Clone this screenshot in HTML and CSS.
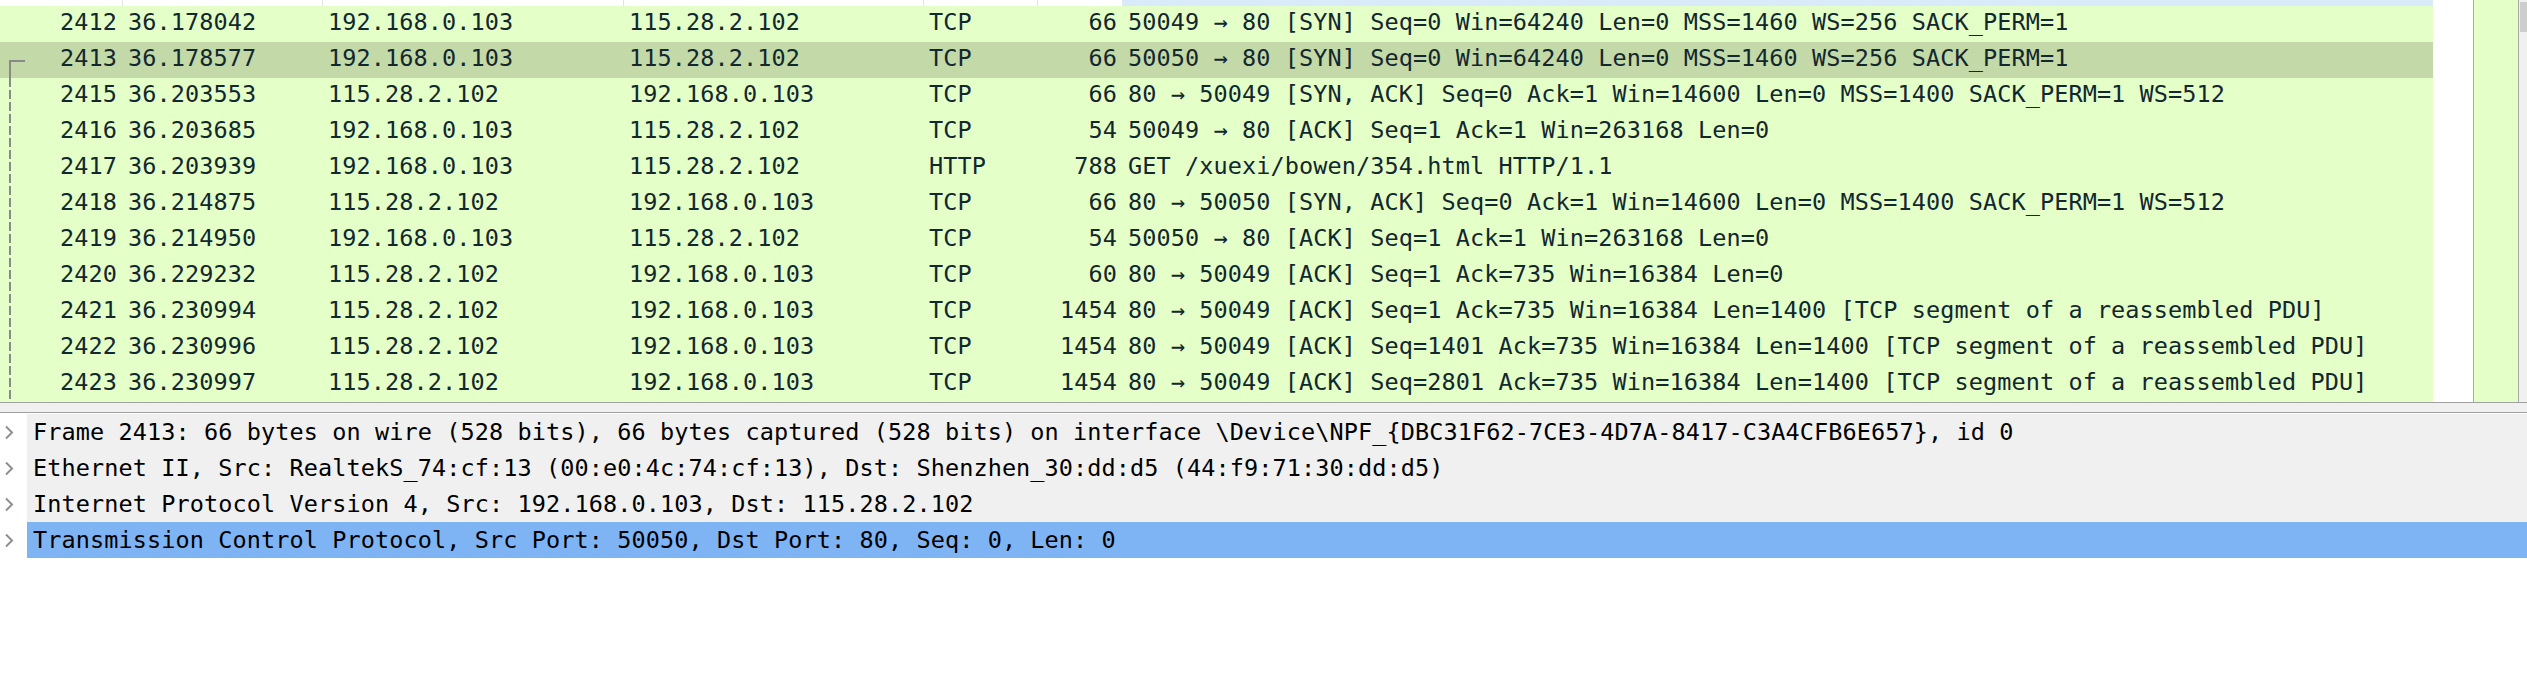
FILE: index.html
```html
<!DOCTYPE html>
<html>
<head>
<meta charset="utf-8">
<link rel="stylesheet" href="styles.css">
</head>
<body>
<div class="app">
  <section class="packet-pane">
    <div class="list-viewport">
      <div class="list-header">
        <div class="hcell"></div>
        <div class="hcell sep"></div>
        <div class="hcell sep"></div>
        <div class="hcell sep"></div>
        <div class="hcell sep"></div>
        <div class="hcell sep"></div>
        <div class="hcell info"></div>
      </div>
      <div class="row">
        <span class="c r">2412</span><span class="c">36.178042</span><span class="c">192.168.0.103</span><span class="c">115.28.2.102</span><span class="c">TCP</span><span class="c r">66</span><span class="c">50049 → 80 [SYN] Seq=0 Win=64240 Len=0 MSS=1460 WS=256 SACK_PERM=1</span>
      </div>
      <div class="row sel rel-start">
        <span class="c r">2413</span><span class="c">36.178577</span><span class="c">192.168.0.103</span><span class="c">115.28.2.102</span><span class="c">TCP</span><span class="c r">66</span><span class="c">50050 → 80 [SYN] Seq=0 Win=64240 Len=0 MSS=1460 WS=256 SACK_PERM=1</span>
      </div>
      <div class="row rel">
        <span class="c r">2415</span><span class="c">36.203553</span><span class="c">115.28.2.102</span><span class="c">192.168.0.103</span><span class="c">TCP</span><span class="c r">66</span><span class="c">80 → 50049 [SYN, ACK] Seq=0 Ack=1 Win=14600 Len=0 MSS=1400 SACK_PERM=1 WS=512</span>
      </div>
      <div class="row rel">
        <span class="c r">2416</span><span class="c">36.203685</span><span class="c">192.168.0.103</span><span class="c">115.28.2.102</span><span class="c">TCP</span><span class="c r">54</span><span class="c">50049 → 80 [ACK] Seq=1 Ack=1 Win=263168 Len=0</span>
      </div>
      <div class="row rel">
        <span class="c r">2417</span><span class="c">36.203939</span><span class="c">192.168.0.103</span><span class="c">115.28.2.102</span><span class="c">HTTP</span><span class="c r">788</span><span class="c">GET /xuexi/bowen/354.html HTTP/1.1</span>
      </div>
      <div class="row rel">
        <span class="c r">2418</span><span class="c">36.214875</span><span class="c">115.28.2.102</span><span class="c">192.168.0.103</span><span class="c">TCP</span><span class="c r">66</span><span class="c">80 → 50050 [SYN, ACK] Seq=0 Ack=1 Win=14600 Len=0 MSS=1400 SACK_PERM=1 WS=512</span>
      </div>
      <div class="row rel">
        <span class="c r">2419</span><span class="c">36.214950</span><span class="c">192.168.0.103</span><span class="c">115.28.2.102</span><span class="c">TCP</span><span class="c r">54</span><span class="c">50050 → 80 [ACK] Seq=1 Ack=1 Win=263168 Len=0</span>
      </div>
      <div class="row rel">
        <span class="c r">2420</span><span class="c">36.229232</span><span class="c">115.28.2.102</span><span class="c">192.168.0.103</span><span class="c">TCP</span><span class="c r">60</span><span class="c">80 → 50049 [ACK] Seq=1 Ack=735 Win=16384 Len=0</span>
      </div>
      <div class="row rel">
        <span class="c r">2421</span><span class="c">36.230994</span><span class="c">115.28.2.102</span><span class="c">192.168.0.103</span><span class="c">TCP</span><span class="c r">1454</span><span class="c">80 → 50049 [ACK] Seq=1 Ack=735 Win=16384 Len=1400 [TCP segment of a reassembled PDU]</span>
      </div>
      <div class="row rel">
        <span class="c r">2422</span><span class="c">36.230996</span><span class="c">115.28.2.102</span><span class="c">192.168.0.103</span><span class="c">TCP</span><span class="c r">1454</span><span class="c">80 → 50049 [ACK] Seq=1401 Ack=735 Win=16384 Len=1400 [TCP segment of a reassembled PDU]</span>
      </div>
      <div class="row rel">
        <span class="c r">2423</span><span class="c">36.230997</span><span class="c">115.28.2.102</span><span class="c">192.168.0.103</span><span class="c">TCP</span><span class="c r">1454</span><span class="c">80 → 50049 [ACK] Seq=2801 Ack=735 Win=16384 Len=1400 [TCP segment of a reassembled PDU]</span>
      </div>
    </div>
    <div class="minimap"></div>
    <div class="vscroll"><div class="thumb"></div></div>
  </section>
  <div class="splitter"></div>
  <section class="detail-pane">
    <div class="drow">
      <span class="exp"><svg width="27" height="36" viewBox="0 0 27 36"><polyline points="6,12.5 12,18.5 6,24.5" fill="none" stroke="#8f8f8f" stroke-width="2"/></svg></span>
      <span class="dtext">Frame 2413: 66 bytes on wire (528 bits), 66 bytes captured (528 bits) on interface \Device\NPF_{DBC31F62-7CE3-4D7A-8417-C3A4CFB6E657}, id 0</span>
    </div>
    <div class="drow">
      <span class="exp"><svg width="27" height="36" viewBox="0 0 27 36"><polyline points="6,12.5 12,18.5 6,24.5" fill="none" stroke="#8f8f8f" stroke-width="2"/></svg></span>
      <span class="dtext">Ethernet II, Src: RealtekS_74:cf:13 (00:e0:4c:74:cf:13), Dst: Shenzhen_30:dd:d5 (44:f9:71:30:dd:d5)</span>
    </div>
    <div class="drow">
      <span class="exp"><svg width="27" height="36" viewBox="0 0 27 36"><polyline points="6,12.5 12,18.5 6,24.5" fill="none" stroke="#8f8f8f" stroke-width="2"/></svg></span>
      <span class="dtext">Internet Protocol Version 4, Src: 192.168.0.103, Dst: 115.28.2.102</span>
    </div>
    <div class="drow sel">
      <span class="exp"><svg width="27" height="36" viewBox="0 0 27 36"><polyline points="6,12.5 12,18.5 6,24.5" fill="none" stroke="#8f8f8f" stroke-width="2"/></svg></span>
      <span class="dtext">Transmission Control Protocol, Src Port: 50050, Dst Port: 80, Seq: 0, Len: 0</span>
    </div>
  </section>
</div>
</body>
</html>
```

FILE: styles.css
```css
html, body {
  margin: 0;
  padding: 0;
  background: #ffffff;
}

body {
  font-family: "DejaVu Sans Mono", "Liberation Mono", monospace;
  font-size: 23.5px;
  letter-spacing: 0.1px;
}

.app {
  width: 2527px;
  height: 674px;
  display: flex;
  flex-direction: column;
  overflow: hidden;
}

.packet-pane {
  display: flex;
  height: 402px;
  flex: none;
}

.list-viewport {
  width: 2473px;
  flex: none;
  background: #ffffff;
}

.list-header,
.row {
  display: grid;
  grid-template-columns: 122px 200px 301px 300px 114px 85px 1311px;
  width: 2433px;
}

.list-header {
  height: 6px;
}

.hcell {
  background: #ffffff;
  box-sizing: border-box;
}

.hcell.sep {
  border-left: 1px solid #e3e3e3;
}

.hcell.info {
  background: #d9eaf9;
}

.row {
  height: 36px;
  line-height: 33px;
  background: #e4ffc7;
  color: #12272e;
  white-space: pre;
  position: relative;
}

.row.sel {
  background: #c3d9a8;
}

.c {
  padding: 0 5px 0 6px;
  overflow: hidden;
}

.c.r {
  text-align: right;
}

.row.rel-start::before {
  content: "";
  position: absolute;
  left: 9px;
  top: 18px;
  width: 16px;
  height: 2px;
  background: #8a8a8a;
}

.row.rel-start::after {
  content: "";
  position: absolute;
  left: 9px;
  top: 18px;
  bottom: 0;
  width: 2px;
  background: #8a8a8a;
}

.row.rel::after {
  content: "";
  position: absolute;
  left: 9px;
  top: 0;
  bottom: 0;
  width: 2px;
  background: repeating-linear-gradient(to bottom, #8a8a8a 0 9px, transparent 9px 12px);
}

.minimap {
  width: 44px;
  flex: none;
  background: #e4ffc7;
  border-left: 1px solid #a9a9a9;
  border-right: 1px solid #a9a9a9;
}

.vscroll {
  flex: 1;
  background: #f0f0f0;
  padding: 2px 0 0 1px;
}

.thumb {
  height: 30px;
  background: #cdcdcd;
}

.splitter {
  height: 11px;
  flex: none;
  box-sizing: border-box;
  background: #f0f0f0;
  border-top: 1px solid #a0a0a0;
  border-bottom: 1px solid #a0a0a0;
}

.detail-pane {
  flex: 1;
  padding-top: 1px;
  background: #ffffff;
}

.drow {
  display: flex;
  height: 36px;
  line-height: 36px;
  white-space: pre;
  color: #000000;
}

.exp {
  width: 27px;
  flex: none;
  background: #ffffff;
}

.exp svg {
  display: block;
}

.dtext {
  flex: 1;
  background: #f0f0f0;
  padding-left: 6px;
}

.drow.sel .dtext {
  background: #7fb4f4;
}
```
